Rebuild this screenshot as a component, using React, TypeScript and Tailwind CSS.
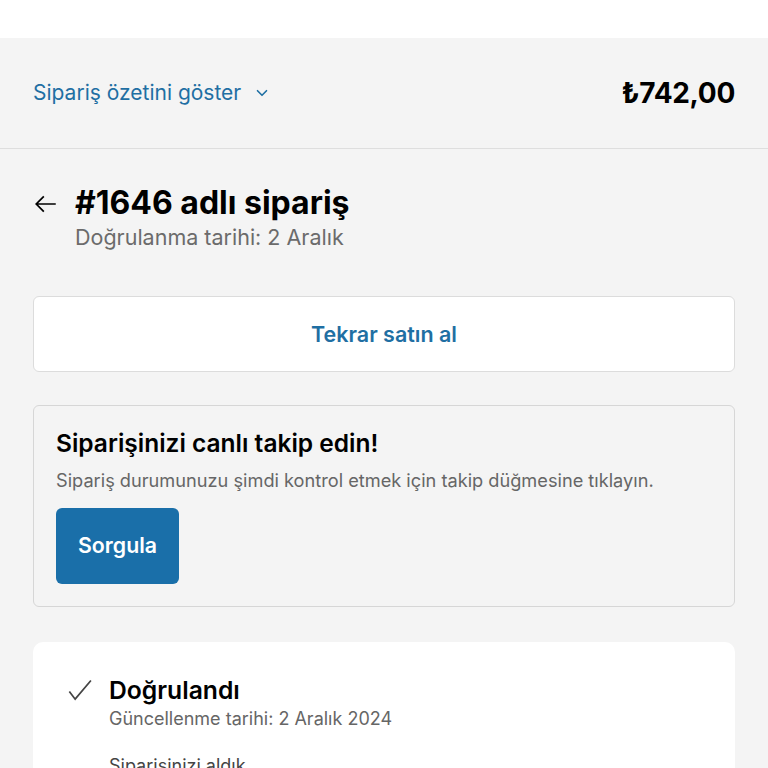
import { ChevronDown } from 'lucide-react'

export default function App() {
  return (
    <div className="h-[768px] w-[768px] overflow-hidden bg-[#f4f4f4] font-['Inter',sans-serif] text-black">
      <div className="h-[38px] bg-white" />
      {/* order summary toggle */}
      <div className="flex h-[111px] items-center justify-between border-b border-[#dedede] px-[33px]">
        <button className="flex items-center gap-[12px] text-[21px] text-[#1f6fa3]">
          Sipariş özetini göster
          <ChevronDown size={18} strokeWidth={2.2} />
        </button>
        <span className="text-[28px] font-bold tracking-[-0.3px]">₺742,00</span>
      </div>

      <div className="px-[33px]">
        <div className="mt-[34px] flex items-start gap-[16px]">
          <svg width="26" height="26" viewBox="0 0 24 24" fill="none" stroke="black" strokeWidth="1.6" className="mt-[8px]">
            <path d="M21 12H3M10 5l-7 7 7 7" />
          </svg>
          <div>
            <h1 className="text-[32px] font-bold leading-[40px]">#1646 adlı sipariş</h1>
            <p className="mt-0 text-[21.5px] leading-[28px] text-[#6b6b6b]">Doğrulanma tarihi: 2 Aralık</p>
          </div>
        </div>

        <button className="mt-[45px] flex h-[76px] w-full items-center justify-center rounded-[6px] border border-[#dcdcdc] bg-white text-[21.5px] font-semibold text-[#1f6fa3]">
          Tekrar satın al
        </button>

        <div className="mt-[33px] rounded-[6px] border border-[#d6d6d6] bg-[#f4f4f4] px-[22px] pt-[20px] pb-[22px]">
          <h2 className="text-[24.5px] font-semibold leading-[34px]">Siparişinizi canlı takip edin!</h2>
          <p className="mt-[7px] text-[18.2px] leading-[26px] text-[#666]">Sipariş durumunuzu şimdi kontrol etmek için takip düğmesine tıklayın.</p>
          <button className="mt-[15px] h-[76px] rounded-[6px] bg-[#1a6fa9] px-[22px] text-[21.3px] font-semibold text-white">Sorgula</button>
        </div>

        <div className="mt-[35px] rounded-t-[10px] bg-white px-[34px] pt-[32px] pb-[40px]">
          <div className="flex items-start gap-[14px]">
            <svg width="28" height="28" viewBox="0 0 24 24" fill="none" stroke="#444" strokeWidth="1.5" className="mt-[3px]">
              <path d="M2 12.5l5 6.5L20.5 3" />
            </svg>
            <div>
              <h3 className="text-[24.7px] font-semibold leading-[32px]">Doğrulandı</h3>
              <p className="text-[18px] leading-[26px] text-[#666]">Güncellenme tarihi: 2 Aralık 2024</p>
              <p className="mt-[20px] text-[18px] text-[#444]">Siparişinizi aldık.</p>
            </div>
          </div>
        </div>
      </div>
    </div>
  )
}
